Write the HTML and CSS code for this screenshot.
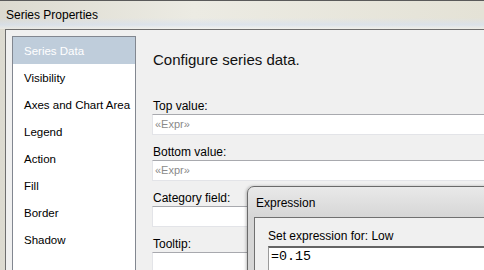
FILE: index.html
```html
<!DOCTYPE html>
<html lang="en">
<head>
    <meta charset="UTF-8">
    <title>Series Properties</title>
    <link rel="stylesheet" href="styles.css">
</head>
<body>
    <div class="window">
        <div class="titlebar">Series Properties</div>
        <div class="client">
            <ul class="nav">
                <li class="nav-item selected">Series Data</li>
                <li class="nav-item">Visibility</li>
                <li class="nav-item">Axes and Chart Area</li>
                <li class="nav-item">Legend</li>
                <li class="nav-item">Action</li>
                <li class="nav-item">Fill</li>
                <li class="nav-item">Border</li>
                <li class="nav-item">Shadow</li>
            </ul>
            <div class="main">
                <h2 class="heading">Configure series data.</h2>
                <div class="field">
                    <label>Top value:</label>
                    <div class="textbox placeholder">«Expr»</div>
                </div>
                <div class="field">
                    <label>Bottom value:</label>
                    <div class="textbox placeholder">«Expr»</div>
                </div>
                <div class="field">
                    <label>Category field:</label>
                    <div class="textbox"></div>
                </div>
                <div class="field">
                    <label>Tooltip:</label>
                    <div class="textbox"></div>
                </div>
            </div>
        </div>
    </div>

    <div class="dialog">
        <div class="dialog-title">Expression</div>
        <div class="dialog-client">
            <div class="dialog-label">Set expression for: Low</div>
            <div class="expr-box">=0.15</div>
        </div>
    </div>
</body>
</html>
```

FILE: styles.css
```css
html {
    overflow: hidden;
}
body {
    margin: 0;
    width: 484px;
    height: 270px;
    overflow: hidden;
    position: relative;
    font-family: "Liberation Sans", Arial, sans-serif;
    font-size: 12px;
    color: #000;
    background: #e6e3d8;
}
.window {
    height: 270px;
    display: flex;
    flex-direction: column;
    border-top: 1px solid #5a5a5a;
    box-sizing: border-box;
    background: linear-gradient(to right, #dcdad0, #ecebe3 40%, #e4e2d6);
}
.titlebar {
    height: 28px;
    line-height: 28px;
    padding-left: 6px;
    box-sizing: border-box;
    background: linear-gradient(to bottom, rgba(255,255,255,0) 60%, rgba(215,225,240,0.7) 85%, rgba(255,255,255,0.4));
}
.client {
    flex: 1;
    margin-left: 5px;
    border-left: 1px solid #6e6e6e;
    border-top: 1px solid #6e6e6e;
    background: #f0f0f0;
    display: flex;
    padding: 6px 0 0 6px;
    overflow: hidden;
}
.nav {
    list-style: none;
    margin: 0;
    padding: 0;
    width: 122px;
    border: 1px solid #828790;
    border-bottom: none;
    background: #fff;
    flex-shrink: 0;
    font-size: 11.5px;
}
.nav-item {
    height: 26px;
    padding-top: 1px;
    line-height: 27px;
    padding-left: 11px;
    white-space: nowrap;
    overflow: hidden;
}
.nav-item.selected {
    background: #bfcddb;
    color: #fff;
}
.main {
    flex: 1;
    padding-left: 16px;
}
.heading {
    margin: 13px 0 27px 1px;
    font-size: 15px;
    font-weight: normal;
    line-height: 22px;
    color: #111;
}
.field {
    margin-bottom: 9px;
}
.field label {
    display: block;
    height: 16px;
    line-height: 16px;
    padding-left: 1px;
}
.textbox {
    height: 21px;
    box-sizing: border-box;
    border: 1px solid #e3e4e8;
    border-top-color: #a8a9ae;
    border-right: none;
    background: #fff;
    padding-left: 2px;
    line-height: 19px;
    font-size: 11px;
}
.placeholder {
    color: #8a8a8a;
}
.dialog {
    position: absolute;
    left: 247px;
    top: 186px;
    width: 250px;
    height: 90px;
    border: 1px solid #6a6a6a;
    border-radius: 7px 0 0 0;
    background: linear-gradient(to bottom, #e9e9e9, #d6d6d6 30px);
    display: flex;
    flex-direction: column;
    box-shadow: -1px 0 3px rgba(0,0,0,0.25);
}
.dialog-title {
    height: 30px;
    line-height: 32px;
    padding-left: 8px;
    box-sizing: border-box;
}
.dialog-client {
    flex: 1;
    margin-left: 6px;
    border-left: 1px solid #707070;
    border-top: 1px solid #707070;
    background: #f0f0f0;
    padding: 10px 0 0 13px;
}
.dialog-label {
    height: 18px;
    line-height: 16px;
}
.expr-box {
    height: 30px;
    border-top: 2px solid #646464;
    border-left: 1px solid #9a9a9a;
    background: #fff;
    padding-left: 2px;
    font-family: "Liberation Mono", monospace;
    font-size: 13.33px;
    line-height: 18px;
}
```
